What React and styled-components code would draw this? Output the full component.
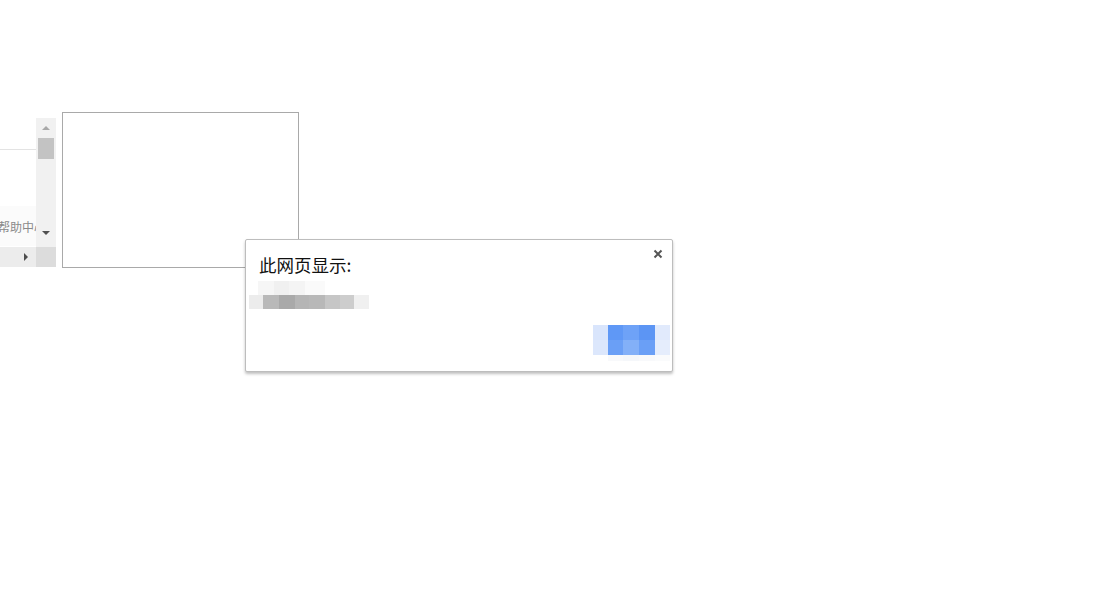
import React from "react";
import styled, { createGlobalStyle } from "styled-components";

const Global = createGlobalStyle`
  html, body { margin: 0; padding: 0; background: #fff; }
  body { font-family: "Noto Sans CJK SC", "Liberation Sans", sans-serif; }
`;

const Page = styled.div`
  position: relative;
  width: 1113px;
  height: 589px;
  overflow: hidden;
  background: #fff;
  padding-top: 112px;
  box-sizing: border-box;
`;

const Row = styled.div`
  display: flex;
  align-items: flex-start;
  gap: 6px;
`;

const LeftPanel = styled.div`
  margin-top: 6px;
  width: 56px;
  display: grid;
  grid-template-columns: 36px 20px;
  grid-template-rows: 129px 20px;
`;

const ListArea = styled.div`
  display: flex;
  flex-direction: column;
  overflow: hidden;
`;

const Rule = styled.div`
  margin-top: 31px;
  height: 1px;
  background: #e3e3e3;
`;

const ItemRow = styled.div`
  margin-top: 56px;
  height: 40px;
  display: flex;
  align-items: center;
  background: #fbfbfb;
  overflow: hidden;
`;

const ItemText = styled.span`
  margin-left: -2px;
  font-size: 12px;
  color: #8a8a8a;
  white-space: nowrap;
`;

const VScroll = styled.div`
  background: #f1f1f1;
  display: flex;
  flex-direction: column;
  align-items: center;
`;

const Arrow = styled.div`
  width: 0;
  height: 0;
  border-left: 4px solid transparent;
  border-right: 4px solid transparent;
  ${(p) =>
    p.$dir === "up"
      ? `border-bottom: 4px solid ${p.$color}; margin-top: ${p.$mt}px;`
      : `border-top: 4px solid ${p.$color}; margin-top: ${p.$mt}px;`}
`;

const Thumb = styled.div`
  margin-top: 8px;
  width: 16px;
  height: 21px;
  background: #c3c3c3;
`;

const HBar = styled.div`
  background: #ececec;
  display: flex;
  align-items: center;
  justify-content: flex-end;
  padding-right: 8px;
`;

const RightArrow = styled.div`
  width: 0;
  height: 0;
  border-top: 4px solid transparent;
  border-bottom: 4px solid transparent;
  border-left: 4px solid #4d4d4d;
`;

const Corner = styled.div`
  background: #dcdcdc;
`;

const TextBox = styled.div`
  width: 237px;
  height: 156px;
  box-sizing: border-box;
  border: 1px solid #a9a9a9;
  background: #fff;
`;

const Dialog = styled.div`
  position: absolute;
  left: 245px;
  top: 239px;
  width: 428px;
  box-sizing: border-box;
  border: 1px solid #bdbdbd;
  border-radius: 2px;
  box-shadow: 0 2px 3px rgba(0, 0, 0, 0.25);
  background: #fff;
  padding: 15px 13px 10px;
  display: flex;
  flex-direction: column;
`;

const Close = styled.button`
  position: absolute;
  top: 9px;
  right: 9px;
  width: 10px;
  height: 10px;
  padding: 0;
  border: 0;
  background: none;
  display: flex;
`;

const Title = styled.div`
  font-size: 17.5px;
  line-height: 20px;
  color: #111;
`;

const Blur = styled.div`
  display: flex;
  flex-direction: column;
  margin-left: ${(p) => p.$ml}px;
  margin-top: ${(p) => p.$mt}px;
  align-self: ${(p) => p.$align || "flex-start"};
  margin-right: ${(p) => p.$mr || 0}px;
`;

const BlurRow = styled.div`
  display: flex;
  height: ${(p) => p.$h}px;
`;

const Cell = styled.div`
  width: ${(p) => p.$w}px;
  height: 100%;
  background: ${(p) => p.$c};
`;

const msgRows = [
  { h: 14, cells: [[9, "#fff"], [16, "#f6f6f6"], [15, "#f0f0f0"], [16, "#f4f4f4"], [20, "#fafafa"]] },
  { h: 14, cells: [[14, "#ececec"], [16, "#b9b9b9"], [16, "#a9a9a9"], [14, "#b5b5b5"], [16, "#b8b8b8"], [15, "#c6c6c6"], [14, "#cdcdcd"], [15, "#f0f0f0"]] },
];

const btnRows = [
  { h: 15, cells: [[15, "#d9e5fc"], [15, "#5f98f6"], [16, "#6ea2f7"], [16, "#5c95f4"], [15, "#e1eafc"]] },
  { h: 15, cells: [[15, "#dce7fc"], [15, "#6a9ff6"], [16, "#83b0f8"], [16, "#6a9ff6"], [15, "#e5edfc"]] },
  { h: 6, cells: [[15, "#fff"], [15, "#f8f9fb"], [16, "#f5f7fa"], [16, "#f8f9fb"], [15, "#fafbfc"]] },
];

function Pixelated({ rows, ...rest }) {
  return (
    <Blur {...rest}>
      {rows.map((r, i) => (
        <BlurRow key={i} $h={r.h}>
          {r.cells.map(([w, c], j) => (
            <Cell key={j} $w={w} $c={c} />
          ))}
        </BlurRow>
      ))}
    </Blur>
  );
}

export default function App() {
  return (
    <>
      <Global />
      <Page>
        <Row>
          <LeftPanel>
            <ListArea>
              <Rule />
              <ItemRow>
                <ItemText>帮助中心</ItemText>
              </ItemRow>
            </ListArea>
            <VScroll>
              <Arrow $dir="up" $color="#a8a8a8" $mt={8} />
              <Thumb />
              <Arrow $dir="down" $color="#505050" $mt={72} />
            </VScroll>
            <HBar>
              <RightArrow />
            </HBar>
            <Corner />
          </LeftPanel>
          <TextBox />
        </Row>
        <Dialog>
          <Close aria-label="关闭">
            <svg width="10" height="10" viewBox="0 0 10 10">
              <path d="M1.5 1.5 L8.5 8.5 M8.5 1.5 L1.5 8.5" stroke="#555" strokeWidth="2" />
            </svg>
          </Close>
          <Title>此网页显示:</Title>
          <Pixelated rows={msgRows} $ml={-10} $mt={6} />
          <Pixelated rows={btnRows} $ml={0} $mt={16} $align="flex-end" $mr={-11} />
        </Dialog>
      </Page>
    </>
  );
}
